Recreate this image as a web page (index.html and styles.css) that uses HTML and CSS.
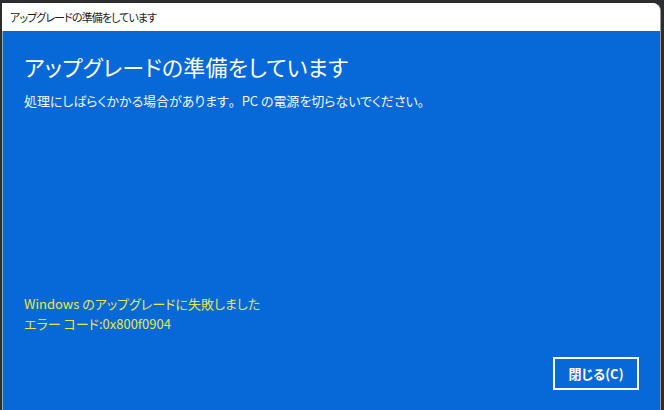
FILE: index.html
```html
<!DOCTYPE html>
<html lang="ja">
<head>
<meta charset="utf-8">
<title>アップグレードの準備をしています</title>
<link rel="stylesheet" href="styles.css">
</head>
<body>
<div class="window">
  <div class="titlebar">アップグレードの準備をしています</div>
  <div class="content">
    <h1 class="heading">アップグレードの準備をしています</h1>
    <p class="sub">処理にしばらくかかる場合があります<span class="fw">。</span>PC の電源を切らないでください。</p>
    <div class="error">
      <div class="err-line">Windows のアップグレードに失敗しました</div>
      <div class="err-line">エラー コード:0x800f0904</div>
    </div>
    <div class="actions">
      <button class="close-btn">閉じる(C)</button>
    </div>
  </div>
</div>
</body>
</html>
```

FILE: styles.css
```css
html, body {
  margin: 0;
  padding: 0;
  height: 100%;
}
body {
  background: #2b2d2e;
  font-family: "Noto Sans CJK JP", "Noto Sans", sans-serif;
  font-feature-settings: "palt";
  overflow: hidden;
}
.window {
  margin: 3px 0 0 2px;
  width: 658px;
  height: 407px;
  display: flex;
  flex-direction: column;
  border-top-right-radius: 8px;
  overflow: hidden;
  background: #fff;
  box-shadow: 1px 0 0 #9a9a9a;
}
.titlebar {
  height: 28px;
  box-sizing: border-box;
  padding: 7px 0 0 8px;
  font-size: 11px;
  letter-spacing: -0.9px;
  line-height: 14px;
  color: #1a1a1a;
  background: #fff;
}
.content {
  flex: 1;
  background: #0768d7;
  display: flex;
  flex-direction: column;
  padding: 19px 21px 20px 21px;
  border-left: 1px solid #8fa9c8;
}
.heading {
  margin: 0;
  font-weight: 400;
  font-size: 22px;
  line-height: 32px;
  color: #fff;
  letter-spacing: 0.2px;
}
.sub {
  margin: 9px 0 0 0;
  font-size: 13px;
  line-height: 20px;
  color: #f2f6fb;
  letter-spacing: -0.05px;
}
.fw {
  font-feature-settings: normal;
}
.error {
  margin-top: auto;
  color: #e3e84b;
  font-size: 13px;
  line-height: 20px;
}
.actions {
  display: flex;
  justify-content: flex-end;
  margin-top: 23px;
}
.close-btn {
  width: 86px;
  height: 33px;
  border: 2px solid #fff;
  background: transparent;
  color: #fff;
  font-family: "Noto Sans CJK JP", "Noto Sans", sans-serif;
  font-feature-settings: "palt";
  font-weight: 700;
  font-size: 13px;
  padding: 0;
}
```
